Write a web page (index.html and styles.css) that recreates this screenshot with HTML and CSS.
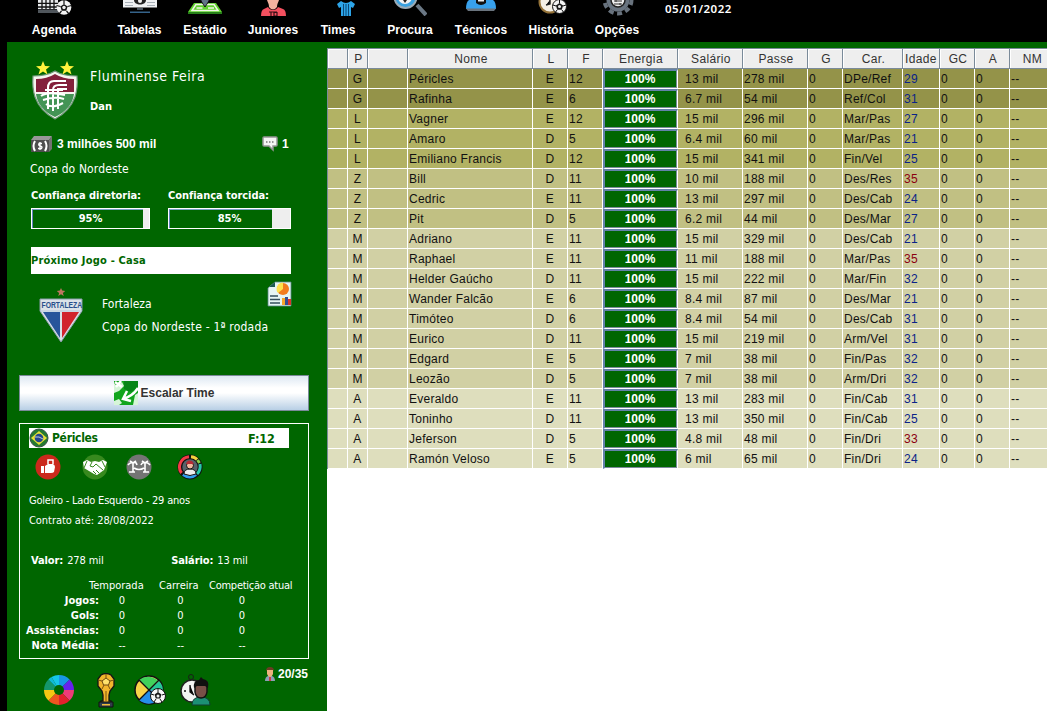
FILE: index.html
```html
<!DOCTYPE html>
<html lang="pt-BR">
<head>
<meta charset="utf-8">
<title>Fluminense Feira</title>
<link rel="stylesheet" href="styles.css">
</head>
<body>
<nav class="topbar">
  <div class="nav nav-agenda"><svg class="ic-agenda" width="34" height="16" viewBox="0 0 34 16"><path fill="#e8eaec" d="M0 0h20v9H0z"/><path stroke="#111" stroke-width="1.3" d="M0 3.3h20M0 7h20M4 0v9M8 0v9M12 0v9M16 0v9"/><path fill="#50565c" d="M0 9.500h20v3.500H0z"/><circle cx="26" cy="7.500" r="7.300" fill="#f3f3f3"/><path fill="#111" d="M26 4l3.600 2.600-1.300 4.200h-4.600l-1.300-4.200z"/><path stroke="#111" stroke-width="1.200" d="M26 4V0M29.500 6.500l4-1M28.500 11l2.500 3M23.500 11L21 14M22.500 6.500l-4-1"/><circle cx="26" cy="7.500" r="1.700" fill="#eee"/></svg><span>Agenda</span></div>
  <div class="nav nav-tabelas"><svg width="34" height="16" viewBox="0 0 34 16"><path fill="#f0f2f4" d="M0 0h34v7.500H0z"/><path fill="#a8b0b8" d="M2 5h8v1H2zM24 5h8v1h-8zM2 2h8v1H2zM24 2h8v1h-8z"/><path fill="#222" d="M11 0h12c0 6-12 6-12 0z"/><circle cx="17" cy="1" r="2" fill="#eee"/><path fill="#35638a" d="M7 11.500h20v1.500H7z"/><path fill="#4a555f" d="M14 8h6v2h-6z"/></svg><span>Tabelas</span></div>
  <div class="nav nav-estadio"><svg width="34" height="16" viewBox="0 0 34 16"><path fill="#5fd02e" d="M6 3h22l6 9H0z"/><path fill="none" stroke="#f2f5e9" stroke-width="1.500" d="M8 4.500L4 10.500h26l-4-6zM8.500 8h6M20 8h6"/><path fill="#268018" d="M0 12h34v2H0z"/><path fill="#617487" stroke="#111" d="M12.500-2h9c0 3-2 5-4.500 9-2.500-4-4.500-6-4.500-9z"/></svg><span>Estádio</span></div>
  <div class="nav nav-juniores"><svg width="34" height="16" viewBox="0 0 34 16"><path fill="#f3b3a0" d="M11 0h12c-1 3-2 4-2 7q-4 5-8 0c0-3-1-4-2-7z"/><path fill="#f4505f" d="M12 7c2 4 8 4 10 0l5 2q3 1 3 7H5q0-6 3-7z"/><path stroke="#351015" stroke-width="1.200" fill="none" d="M13 12h8M15 12v4M18 12.500h3v3.500h-3z"/></svg><span>Juniores</span></div>
  <div class="nav nav-times"><svg class="ic-times" width="18" height="16" viewBox="0 0 18 16"><path fill="#2da4e8" d="M4 1q5 4 10 0l4 3-2 4-2-1v9H4V7L2 8 0 4z"/><path stroke="#0b4977" stroke-width="1" d="M6.500 4v12M9 4v12M11.500 4v12"/></svg><span>Times</span></div>
  <div class="nav nav-procura"><svg width="34" height="16" viewBox="0 0 34 16"><path stroke="#6b7885" stroke-width="4" d="M24 5l9 10"/><circle cx="12.500" cy="-3" r="11" fill="#3ba1df" stroke="#9babb6" stroke-width="2"/><circle cx="12" cy="-3" r="7" fill="#f2f2f2"/><path fill="#222" d="M10 0h4l-2 3z"/></svg><span>Procura</span></div>
  <div class="nav nav-tecnicos"><svg width="34" height="16" viewBox="0 0 34 16"><path fill="#38a1ed" d="M5 0h24q3 2 3 9H2q0-7 3-9z"/><path fill="#6a747e" d="M2 8.500h30l-2 2.500H4z"/><path fill="#111" d="M12 0h10v3q-5 4-10 0z"/><path fill="#eee" d="M14 0h6v1.500h-6z"/></svg><span>Técnicos</span></div>
  <div class="nav nav-historia"><svg width="34" height="16" viewBox="0 0 34 16"><circle cx="16" cy="2" r="10.500" fill="#f5f0e6" stroke="#957339" stroke-width="2"/><path stroke="#222" stroke-width="1.500" d="M16 0v4l-4 1"/><circle cx="25.500" cy="6.500" r="7" fill="#f4f4f4" stroke="#111"/><path fill="#181818" d="M25.500 3l3.600 2.600-1.300 4.200h-4.600l-1.300-4.200z"/><circle cx="25.500" cy="6.500" r="1.500" fill="#eee"/><path stroke="#111" d="M25.500 3V0M29 6l3-1M28 10l2 3M23 10l-2 3M22 6l-3-1"/></svg><span>História</span></div>
  <div class="nav nav-opcoes"><svg width="34" height="16" viewBox="0 0 34 16"><circle cx="18" cy="0" r="13.500" fill="none" stroke="#68727d" stroke-width="4" stroke-dasharray="5 3.500"/><circle cx="18" cy="0" r="11.500" fill="#697480"/><circle cx="18" cy="0" r="7" fill="#f0f0f0" stroke="#222" stroke-width="1.500"/><path stroke="#333" d="M14 1h8M14 4h8M16 0v2M20 3v2"/></svg><span>Opções</span></div>
  <time class="date">05/01/2022</time>
</nav>
<main class="main">
<aside class="side">
  <header class="team">
    <svg width="48" height="60" viewBox="0 0 48 60"><path fill="#f5f5ef" stroke="#70977b" stroke-width="1.200" d="M24 10q8 5 22 5 1 12-2 21-5 14-20 22Q9 50 4 36 1 27 2 15q14 0 22-5z"/><path fill="#83203b" d="M24 13q8 5 19 5v13H5V18q11 0 19-5z"/><path fill="#439455" d="M5 33h38q-2 15-19 23Q7 48 5 33z"/><path fill="none" stroke="#fff" stroke-width="2" d="M17 48V27q0-7 6-7h12M22 50V29q0-5 6-5h8M27 48V28h9M14 29h18M10 35q6-5 24-1M12 39q12-4 21-1M15 43q6 5 17-1"/><path fill="#fff23d" d="M12 0l2 5 5 .3-4 3.200 1.500 5-4.500-3-4.500 3 1.500-5L5 5.300 10 5zM36 0l2 5 5 .3-4 3.200 1.500 5-4.500-3-4.500 3 1.500-5-4-3.200L34 5z"/></svg>
    <div class="team-text"><h1>Fluminense Feira</h1><b class="coach">Dan</b></div>
  </header>
  <div class="money">
    <svg width="22" height="16" viewBox="0 0 22 16"><path fill="#989898" d="M3 0h18l-3 4H0z"/><path fill="#737373" d="M21 0v13l-3 3V4z"/><path fill="#4f4f4f" d="M0 4h18v12H0z"/><path fill="none" stroke="#fff" stroke-width="2" d="M4 5Q1 10 4 15M14 5q3 5 0 10"/><path fill="none" stroke="#fff" stroke-width="1.300" d="M11 7.500H8q-1 2 1 2.500 3 .5 1.500 2.500H7M9 6v8"/></svg>
    <b class="cash">3 milhões 500 mil</b>
    <svg width="16" height="16" viewBox="0 0 16 16"><path fill="#f5f5f5" stroke="#959595" stroke-width="1.500" d="M2 1h12q1 0 1 1v7q0 1-1 1h-3v4l-4-4H2q-1 0-1-1V2q0-1 1-1z"/><path stroke="#777" stroke-width="1.500" stroke-dasharray="1.500 1.500" d="M4 6h9"/></svg>
    <b class="count">1</b>
  </div>
  <div class="cup"><span>Copa do Nordeste</span></div>
  <div class="trust">
    <section><h2>Confiança diretoria:</h2><div class="bar"><i style="width:95%"></i><b>95%</b></div></section>
    <section><h2>Confiança torcida:</h2><div class="bar"><i style="width:85%"></i><b>85%</b></div></section>
  </div>
  <div class="next">Próximo Jogo - Casa</div>
  <div class="match">
    <svg class="rival-crest" width="44" height="56" viewBox="0 0 44 56"><path fill="#bd7660" d="M22 0l1.200 2.600 3 .3-2.300 2 .8 3L22 6.300 19.300 8l.8-3-2.300-2 3-.4z"/><path fill="#dbe2e8" stroke="#889aaa" d="M1 11h42v12L22 54 1 23z"/><path fill="#28559b" d="M4 24h17v26z"/><path fill="#d1232d" d="M23 24h17L23 50z"/><path stroke="#b8c9dc" d="M1 23h42"/><text transform="translate(2.500 20.300) scale(.8 1)">FORTALEZA</text></svg>
    <div class="match-text"><span class="rival">Fortaleza</span><span class="round">Copa do Nordeste - 1ª rodada</span></div>
    <svg class="report" width="25" height="26" viewBox="0 0 25 26"><path fill="#e6f5f4" stroke="#5b8989" stroke-width=".8" d="M1 7l7-6h16v24H1z"/><path fill="#1d5b52" d="M2 6h6V1z"/><circle cx="16" cy="8" r="6" fill="#f27c1f"/><path fill="#ffe14c" d="M16 8V1.500A6.500 6.500 0 0 0 11 12z"/><path stroke="#344f5c" stroke-width="1.500" d="M3 15h8M3 18.500h10M3 22h10"/><path fill="#f5a52a" d="M15 17h3v7h-3z"/><path fill="#354e95" d="M18 16h3v8h-3z"/><path fill="#db352c" d="M21 18h3v6h-3z"/></svg>
  </div>
  <button class="lineup"><svg width="24" height="24" viewBox="0 0 24 24"><path fill="#12a51d" d="M0 0h24v24H0z"/><path fill="#d6f5d8" d="M0 2l3 3 5-4 2 4-5 5-5 2zM21 14l3-2v12h-5zM0 20l5-2 3 4-3 2H0z"/><path fill="#078517" d="M10 0h14v6l-7 5-7-3z"/><path fill="none" stroke="#fff" stroke-width="2.500" d="M24 7Q19 15 9 18m4-8l-4 8 8 2M1 1l7 5M7 0L2 6"/></svg><span>Escalar Time</span></button>
  <section class="player">
    <div class="player-head"><svg width="20" height="20" viewBox="0 0 20 20"><circle cx="10" cy="10" r="9" fill="#257a31" stroke="#365346"/><path fill="#e7df37" d="M10 3l8 7-8 7-8-7z"/><circle cx="10" cy="10" r="4.300" fill="#25458c"/><path stroke="#b9c9dc" d="M6 9q4-1 8 2" fill="none"/></svg><b class="pname">Péricles</b><b class="force">F:12</b></div>
    <div class="actions">
      <svg width="26" height="26" viewBox="0 0 26 26"><circle cx="13" cy="13" r="12.500" fill="#cb291c"/><path fill="#fff" d="M6 12h3v7H6zM10 12l3-2h5q2 1 2 3l-1 5q-1 1-3 1h-6z"/><path fill="none" stroke="#fff" stroke-width="1.500" d="M13 10V6h5v4"/></svg>
      <svg width="26" height="26" viewBox="0 0 26 26"><circle cx="13" cy="13" r="12.500" fill="#37891e"/><path fill="#fff" d="M1 8l4-2 4 2 4-1 4 1 4-2 4 2-3 8-7 5-3-1-5-3-5-3z"/><path fill="none" stroke="#37891e" d="M10 8l-2 4 3 1 3-3 7 6M14 16l3 3M11 17l3 3M5 7l-3 7M20 7l3 6"/></svg>
      <svg width="26" height="26" viewBox="0 0 26 26"><circle cx="13" cy="13" r="12.500" fill="#747474"/><path fill="none" stroke="#fff" stroke-width="1.600" d="M7 18V9M2 11q2-3 5-2 3-2 4 2M4 7l3 2 3-2M19 18V9M15 11q1-3 4-2 3-1 5 2M16 7l3 2 3-2M3 18h6M17 18h6M8 14q5 3 10 0"/></svg>
      <svg width="26" height="26" viewBox="0 0 26 26"><circle cx="13" cy="13" r="12.500" fill="#111"/><g fill="none" stroke-width="3"><path stroke="#f23b45" d="M4.500 19A10.300 10.300 0 0 1 12 2.700"/><path stroke="#f5d33c" d="M14 2.700q4 .3 6 2.800"/><path stroke="#8ace45" d="M20.500 6l2 3"/><path stroke="#25c9aa" d="M23 10q1 6-3 10"/><path stroke="#2f9def" d="M6 20.500q7 5 13 0"/></g><circle cx="13" cy="13" r="7.700" fill="#59626b"/><path fill="#eee" stroke="#111" d="M7 20q0-5 6-5t6 5q-6 3-12 0z"/><circle cx="13" cy="11.500" r="3.500" fill="#f4b89f" stroke="#111"/><path fill="#b52b35" d="M9 10q1-5 6-3l2 3z"/></svg>
    </div>
    <p class="info"><span class="pos">Goleiro - Lado Esquerdo - 29 anos</span></p>
    <p class="info"><span class="contract">Contrato até: 28/08/2022</span></p>
    <div class="worth"><b class="valor">Valor:</b><span class="value">278 mil</span><b class="salario">Salário:</b><span>13 mil</span></div>
    <div class="stats">
      <i></i><span class="h1c">Temporada</span><span class="h2c">Carreira</span><span class="h3c">Competição atual</span>
      <b>Jogos:</b><span>0</span><span>0</span><span>0</span>
      <b>Gols:</b><span>0</span><span>0</span><span>0</span>
      <b>Assistências:</b><span>0</span><span>0</span><span>0</span>
      <b>Nota Média:</b><span>--</span><span>--</span><span>--</span>
    </div>
  </section>
  <footer class="tools">
    <svg class="wheel" width="30" height="30" viewBox="-15 -15 30 30"><path fill="#15c7e8" d="M0 0L-7.500-13A15 15 0 0 1 0-15z"/><path fill="#1898e5" d="M0 0V-15A15 15 0 0 1 10.600-10.600z"/><path fill="#6722ed" d="M0 0L10.600-10.600A15 15 0 0 1 15 0z"/><path fill="#ee3b78" d="M0 0H15A15 15 0 0 1 10.600 10.600z"/><path fill="#e3202d" d="M0 0L10.600 10.600A15 15 0 0 1 0 15z"/><path fill="#ee5520" d="M0 0V15A15 15 0 0 1-10.600 10.600z"/><path fill="#f6c713" d="M0 0L-10.600 10.600A15 15 0 0 1-15 0z"/><path fill="#14966b" d="M0 0H-15A15 15 0 0 1-10.600-10.600z"/><path fill="#10b9d5" d="M0 0L-10.600-10.600A15 15 0 0 1-7.500-13z"/><circle r="5" fill="#060"/></svg>
    <svg class="trophy" width="20" height="35" viewBox="0 0 20 35"><path fill="#f2b62d" stroke="#151515" stroke-width="1.300" d="M5 2Q10-1 15 2l3 4v7l-4 5-1 4v6h2v2H5v-2h2v-6l-1-4-4-5V6z"/><path fill="#ffe26d" stroke="#6d4910" d="M10 5l4 3-1.500 4h-5L6 8z"/><path stroke="#7b5311" d="M10 1v4M14 8l4-1M12 12l2 4M8 12l-2 4M6 8L2 7M10 18v10"/><path fill="#313d4a" stroke="#111" d="M3 29h14v5H3z"/><path fill="#f2bd3b" d="M6 31h8v1.500H6z"/></svg>
    <svg class="pie" width="32" height="31" viewBox="0 0 32 31"><circle cx="15" cy="15" r="14" fill="#f8d449" stroke="#111" stroke-width="1.500"/><path fill="#42d15b" d="M15 15L5 5Q14-2 25 6z"/><path fill="#25c799" d="M15 15L25 6q4 4 4 10z"/><path fill="#258eeb" d="M15 15L5 25q9 7 19 1l4-10z"/><path stroke="#111" stroke-width="1.300" d="M5 5l20 20M25 5L5 25"/><circle cx="24" cy="21" r="7.500" fill="#f7f7f7" stroke="#111"/><path fill="#181818" d="M24 17l3.500 2.500-1.300 4h-4.400l-1.300-4z"/><circle cx="24" cy="21" r="1.500" fill="#eee"/><path stroke="#111" d="M24 17v-3M28 20l3-1M26 24l2 3M22 24l-2 3M20 20l-3-1"/></svg>
    <svg class="watch" width="31" height="32" viewBox="0 0 31 32"><circle cx="11" cy="3" r="2.500" fill="none" stroke="#182018"/><circle cx="12" cy="17" r="11" fill="#f4f4f4" stroke="#202020" stroke-width="1.500"/><path stroke="#111" stroke-width="1.300" d="M10 11v7l4 3M4 17h2"/><path fill="#1c9075" stroke="#103d32" d="M12 31q0-8 9-8t9 8z"/><path fill="#795048" stroke="#121212" stroke-width="1.500" d="M15 11h12v7q-1 6-6 6t-6-6z"/><path fill="#101010" d="M14 14q-1-8 5-8l2-3 2 2q7 1 5 9l-3-2H17z"/></svg>
    <div class="squad"><svg width="10" height="14" viewBox="0 0 10 14"><path fill="#8ca0b5" d="M0 14q0-4 3-5h4q3 1 3 5z"/><path fill="#edb27f" d="M2 2h6v5q-1 3-3 3T2 7z"/><path fill="#6b3c23" d="M1 4q0-4 4-4t4 4L8 3H2z"/><path fill="#ce3946" d="M4 10h2v4H4z"/></svg><b>20/35</b></div>
  </footer>
</aside>
<table class="roster">
  <colgroup><col class="w20"><col class="w20"><col class="w40"><col class="w125"><col class="w35"><col class="w35"><col class="w75"><col class="w65"><col class="w65"><col class="w35"><col class="w60"><col class="w37"><col class="w35"><col class="w35"><col class="w44"></colgroup>
  <thead><tr><th><th>P<th><th>Nome<th>L<th>F<th>Energia<th>Salário<th>Passe<th>G<th>Car.<th class="age">Idade<th>GC<th>A<th>NM</thead>
  <tbody class="g">
    <tr><td><td>G<td><td>Péricles<td>E<td>12<td><b>100%</b><td>13 mil<td>278 mil<td>0<td>DPe/Ref<td>29<td>0<td>0<td>--
    <tr><td><td>G<td><td>Rafinha<td>E<td>6<td><b>100%</b><td>6.7 mil<td>54 mil<td>0<td>Ref/Col<td>31<td>0<td>0<td>--
  </tbody>
  <tbody class="l">
    <tr><td><td>L<td><td>Vagner<td>E<td>12<td><b>100%</b><td>15 mil<td>296 mil<td>0<td>Mar/Pas<td>27<td>0<td>0<td>--
    <tr><td><td>L<td><td>Amaro<td>D<td>5<td><b>100%</b><td>6.4 mil<td>60 mil<td>0<td>Mar/Pas<td>21<td>0<td>0<td>--
    <tr><td><td>L<td><td>Emiliano Francis<td>D<td>12<td><b>100%</b><td>15 mil<td>341 mil<td>0<td>Fin/Vel<td>25<td>0<td>0<td>--
  </tbody>
  <tbody class="z">
    <tr><td><td>Z<td><td>Bill<td>D<td>11<td><b>100%</b><td>10 mil<td>188 mil<td>0<td>Des/Res<td class="old">35<td>0<td>0<td>--
    <tr><td><td>Z<td><td>Cedric<td>E<td>11<td><b>100%</b><td>13 mil<td>297 mil<td>0<td>Des/Cab<td>24<td>0<td>0<td>--
    <tr><td><td>Z<td><td>Pit<td>D<td>5<td><b>100%</b><td>6.2 mil<td>44 mil<td>0<td>Des/Mar<td>27<td>0<td>0<td>--
  </tbody>
  <tbody class="m">
    <tr><td><td>M<td><td>Adriano<td>E<td>11<td><b>100%</b><td>15 mil<td>329 mil<td>0<td>Des/Cab<td>21<td>0<td>0<td>--
    <tr><td><td>M<td><td>Raphael<td>E<td>11<td><b>100%</b><td>11 mil<td>188 mil<td>0<td>Mar/Pas<td class="old">35<td>0<td>0<td>--
    <tr><td><td>M<td><td>Helder Gaúcho<td>D<td>11<td><b>100%</b><td>15 mil<td>222 mil<td>0<td>Mar/Fin<td>32<td>0<td>0<td>--
    <tr><td><td>M<td><td>Wander Falcão<td>E<td>6<td><b>100%</b><td>8.4 mil<td>87 mil<td>0<td>Des/Mar<td>21<td>0<td>0<td>--
    <tr><td><td>M<td><td>Timóteo<td>D<td>6<td><b>100%</b><td>8.4 mil<td>54 mil<td>0<td>Des/Cab<td>31<td>0<td>0<td>--
    <tr><td><td>M<td><td>Eurico<td>D<td>11<td><b>100%</b><td>15 mil<td>219 mil<td>0<td>Arm/Vel<td>31<td>0<td>0<td>--
    <tr><td><td>M<td><td>Edgard<td>E<td>5<td><b>100%</b><td>7 mil<td>38 mil<td>0<td>Fin/Pas<td>32<td>0<td>0<td>--
    <tr><td><td>M<td><td>Leozão<td>D<td>5<td><b>100%</b><td>7 mil<td>38 mil<td>0<td>Arm/Dri<td>32<td>0<td>0<td>--
  </tbody>
  <tbody class="a">
    <tr><td><td>A<td><td>Everaldo<td>E<td>11<td><b>100%</b><td>13 mil<td>283 mil<td>0<td>Fin/Cab<td>31<td>0<td>0<td>--
    <tr><td><td>A<td><td>Toninho<td>D<td>11<td><b>100%</b><td>13 mil<td>350 mil<td>0<td>Fin/Cab<td>25<td>0<td>0<td>--
    <tr><td><td>A<td><td>Jeferson<td>D<td>5<td><b>100%</b><td>4.8 mil<td>48 mil<td>0<td>Fin/Dri<td class="old">33<td>0<td>0<td>--
    <tr><td><td>A<td><td>Ramón Veloso<td>E<td>5<td><b>100%</b><td>6 mil<td>65 mil<td>0<td>Fin/Dri<td>24<td>0<td>0<td>--
  </tbody>
</table>
</main>
</body>
</html>
```
FILE: styles.css
```css
* { box-sizing: border-box; }
body { margin: 0; width: 1047px; height: 711px; overflow: hidden; background: #000; color: #fff; font: 12px/16px "DejaVu Sans Condensed", "DejaVu Sans", sans-serif; font-stretch: condensed; }
h1, h2, p { margin: 0; font-weight: normal; }
svg { display: block; flex: none; }
span, b { white-space: nowrap; }

.topbar { height: 42px; display: flex; }
.nav { display: flex; flex-direction: column; align-items: center; gap: 6px; font: bold 12px/16px "Liberation Sans", sans-serif; letter-spacing: .05px; }
.nav-agenda { width: 108px; }
.nav-tabelas { width: 63px; }
.nav-estadio, .nav-juniores { width: 68px; }
.nav-times { width: 62px; }
.nav-procura { width: 82px; }
.nav-tecnicos { width: 60px; }
.nav-historia { width: 80px; }
.nav-opcoes { width: 52px; }
.ic-agenda { margin-left: 2px; }
.ic-times { margin-left: 16px; }
.date { margin: 1px 0 0 22px; font: 600 12px/16px "Noto Sans", sans-serif; font-size: 11.500px; letter-spacing: .5px; }

.main { display: flex; height: 669px; padding-left: 7px; background: linear-gradient(#060 6px, transparent 6px) 7px 0 no-repeat, linear-gradient(90deg, #000 7px, #060 7px, #060 327px, #fff 327px); }
.side { width: 320px; flex: none; }
.team { display: flex; gap: 11px; height: 90px; padding: 19px 0 0 24px; }
.team-text { display: flex; flex-direction: column; padding-top: 5px; }
.team h1 { font-size: 14px; line-height: 20px; letter-spacing: .5px; }
.coach { margin-top: 13px; font-size: 11px; line-height: 16px; }
.money { display: flex; align-items: center; height: 24px; padding-left: 24px; font: bold 12px/16px "Liberation Sans", sans-serif; }
.cash { width: 209px; padding-left: 4px; }
.count { padding-left: 4px; }
.cup { height: 30px; padding: 5px 0 0 23px; letter-spacing: .12px; }
.trust { display: grid; grid-template-columns: 119px 123px; column-gap: 18px; padding-left: 24px; height: 61px; }
.trust h2 { font-size: 11px; font-weight: bold; line-height: 16px; height: 22px; padding-top: 2px; white-space: nowrap; letter-spacing: -.05px; }
.bar { position: relative; height: 21px; border: 1px solid #fff; background: #eee; text-align: center; line-height: 20px; font-size: 11px; }
.bar i { position: absolute; left: 0; top: 0; height: 100%; background: #060; border-top: 1px solid #7ba3c8; border-left: 1px solid #6382bf; }
.bar b { position: relative; }
.next { width: 260px; height: 27px; margin-left: 24px; background: #fff; color: #060; font-weight: bold; font-size: 11px; line-height: 27px; letter-spacing: .2px; }
.match { display: flex; height: 101px; padding: 14px 0 0 32px; }
.rival-crest { overflow: visible; }
.match text { font: bold 8.500px "Liberation Sans", sans-serif; fill: #284f8b; }
.match-text { display: flex; flex-direction: column; gap: 7px; width: 184px; padding: 8px 0 0 19px; }
.round { letter-spacing: .2px; }
.report { margin-top: -7px; }
.lineup { display: flex; align-items: center; justify-content: center; gap: 3px; width: 290px; height: 36px; margin: 0 0 12px 12px; padding: 0; border: 1px solid #7a8a99; background: linear-gradient(#dde8f3, #fff 35%, #fff 50%, #b8cfe5); color: #333; font: bold 12px/16px "Liberation Sans", sans-serif; }

.player { width: 290px; height: 236px; margin-left: 12px; padding-top: 4px; border: 1px solid #fff; font-size: 11px; line-height: 15px; }
.player-head { display: flex; align-items: center; width: 260px; height: 20px; margin-left: 9px; background: #fff; color: #060; font-size: 12px; }
.pname { width: 199px; padding-left: 3px; letter-spacing: -.3px; }
.force { font-size: 12.500px; letter-spacing: -.1px; }
.actions { display: flex; height: 43px; padding: 6px 0 0 15px; }
.actions svg:nth-child(2) { margin-left: 21px; }
.actions svg:nth-child(3) { margin-left: 18px; }
.actions svg:nth-child(4) { margin-left: 25px; }
.info { height: 20px; padding: 2px 0 0 9px; }
.pos { letter-spacing: -.2px; }
.contract { letter-spacing: -.05px; }
.worth { display: flex; gap: 4px; margin: 22px 0 10px 11px; letter-spacing: -.1px; }
.value { width: 100px; }
.stats { display: grid; grid-template-columns: 79px 46px 73px 86px; line-height: 15px; }
.stats b { text-align: right; }
.stats > span { text-align: center; }
.stats > span:nth-child(4n+3) { padding-right: 2px; }
.stats > span:nth-child(4n+4) { padding-right: 38px; }
.stats > .h1c { margin-left: -10px; text-align: left; }
.stats > .h2c:nth-child(3) { padding: 0 0 0 14px; text-align: left; }
.stats > .h3c:nth-child(4) { margin-left: -9px; padding: 0; text-align: left; letter-spacing: -.25px; }

.tools { display: flex; height: 52px; align-items: center; padding: 10px 0 0 37px; }
.trophy { margin-left: 22px; }
.pie { margin-left: 18px; }
.watch { margin-left: 14px; }
.squad { display: flex; align-items: flex-start; gap: 3px; height: 42px; margin: -4px 0 0 54px; font: bold 12px/14px "Liberation Sans", sans-serif; }

.roster { table-layout: fixed; width: 727px; height: 421px; flex: none; align-self: flex-start; margin-top: 6px; border-collapse: separate; border-spacing: 0; border-left: 1px solid #7a8a99; border-top: 1px solid #7a8a99; color: #111; font: 12px/15px "Liberation Sans", sans-serif; letter-spacing: .25px; }
.w20 { width: 20px; } .w35 { width: 35px; } .w37 { width: 37px; } .w40 { width: 40px; } .w44 { width: 44px; } .w60 { width: 60px; } .w65 { width: 65px; } .w75 { width: 75px; } .w125 { width: 125px; }
.roster th, .roster td { height: 20px; padding: 0; white-space: nowrap; overflow: hidden; }
.roster th { padding: 2px 0 0 2px; background: #eee; border-right: 1px solid #7a8a99; border-bottom: 1px solid #7a8a99; box-shadow: inset 1px 1px #fff; color: #333; font-weight: normal; letter-spacing: .35px; }
.roster .age { padding-left: 0; }
.roster td { padding: 2px 0 0 1px; border-right: 1px solid #fff; border-bottom: 1px solid #fff; }
.roster td:nth-child(2), .roster td:nth-child(5) { text-align: center; padding-left: 0; }
.roster td:nth-child(7) { padding: 0 2px 0 0; background: #060; border: 2px solid #6382a8; border-right: 1px solid #fff; border-bottom: 1px solid #fff; box-shadow: inset -1px -1px #7a8a99; color: #fff; text-align: center; letter-spacing: 0; }
.roster td:nth-child(8) { padding-left: 7px; }
.roster td:nth-child(12) { color: #0a2388; }
.roster td.old:nth-child(12) { color: #8b0010; }
.g { background: #949349; }
.l { background: #b2b264; }
.z { background: #c1c083; }
.m { background: #d1d0a4; }
.a { background: #dedebd; }
```
